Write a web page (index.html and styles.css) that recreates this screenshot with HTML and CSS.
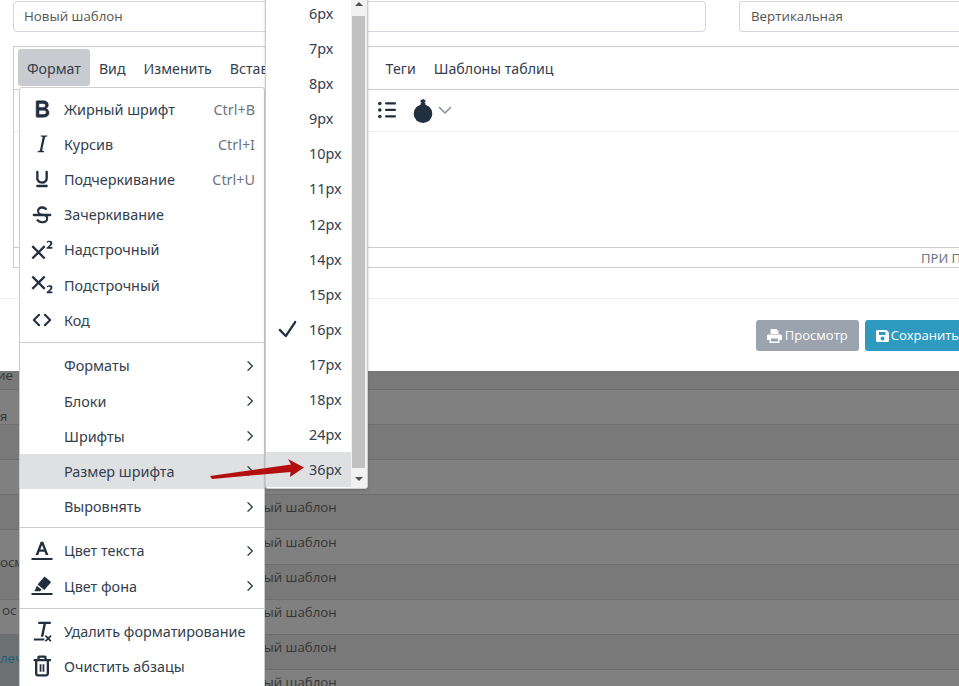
FILE: index.html
```html
<!DOCTYPE html>
<html lang="ru">
  <head>
    <meta charset="UTF-8" />
    <title>Новый шаблон</title>
    <link rel="stylesheet" href="styles.css">
  </head>
  <body>
    <svg class="defs" width="0" height="0">
      <symbol id="chevron" viewBox="0 0 24 24"><path d="M9 5.500l6.500 6.500L9 18.500" fill="none" stroke="currentColor" stroke-width="2" stroke-linecap="round" stroke-linejoin="round"/></symbol>
    </svg>

    <div class="page">
      <div class="topForm">
        <div class="field">Новый шаблон</div>
        <div class="field fieldSelect">Вертикальная</div>
      </div>

      <div class="editor">
        <div class="menuBar">
          <span class="menuBtn menuBtnOpen">Формат</span>
          <span class="menuBtn">Вид</span>
          <span class="menuBtn">Изменить</span>
          <span class="menuBtn">Вставка</span>
          <span class="menuBtn menuBtnHidden"></span>
          <span class="menuBtn">Теги</span>
          <span class="menuBtn">Шаблоны таблиц</span>
        </div>
        <div class="toolBar">
          <svg class="toolList" width="18" height="18" viewBox="0 0 18 18" fill="#222f3e">
            <circle cx="1.800" cy="2.500" r="1.800"/><circle cx="1.800" cy="9" r="1.800"/><circle cx="1.800" cy="15.500" r="1.800"/>
            <rect x="7" y="1.300" width="11" height="2.300" rx="1.100"/><rect x="7" y="7.800" width="11" height="2.300" rx="1.100"/><rect x="7" y="14.300" width="11" height="2.300" rx="1.100"/>
          </svg>
          <svg class="toolBomb" width="20" height="26" viewBox="0 0 20 26" fill="#222f3e">
            <circle cx="10" cy="15.700" r="9.300"/>
            <rect x="7.500" y="5" width="5" height="4" rx="1"/>
            <path d="M10 .5l1 1.500 1.600-.6-.6 1.600 1 1-1.600.4-.4 1.300h-2l-.4-1.300L7 4l1-1-.6-1.600L9 2z"/>
          </svg>
          <svg class="toolCaret" width="14" height="14" viewBox="0 0 14 14"><path d="M1.500 4.500L7 10l5.500-5.500" fill="none" stroke="#8a929c" stroke-width="1.600" stroke-linecap="round" stroke-linejoin="round"/></svg>
        </div>
        <div class="editArea"></div>
        <div class="statusBar">ПРИ ПОДДЕРЖКЕ TINY</div>
      </div>

      <div class="formFooter">
        <button class="btn btnGrey">
          <svg width="15" height="14" viewBox="0 0 15 14" fill="#fff"><path d="M3.500 0h6l2 2v3h-8zM1.500 5.500h12c.8 0 1.500.7 1.500 1.500v4h-2.500v3h-10v-3H0V7c0-.8.7-1.500 1.500-1.500zM4 9.500V12.500h7V9.500z"/></svg>
          <span class="btnText">Просмотр</span>
        </button>
        <button class="btn btnBlue">
          <svg width="14" height="14" viewBox="0 0 14 14" fill="#fff"><path d="M1.500 1H10.500L13 3.500V11.500c0 .8-.7 1.500-1.500 1.500h-10C.7 13 0 12.300 0 11.500v-9C0 1.700.7 1 1.500 1zM3 3v3h6.500V3zM6.500 7.500a2 2 0 100 4 2 2 0 000-4z"/></svg>
          <span class="btnText">Сохранить</span>
        </button>
      </div>

      <div class="tableWrap">
        <div class="row rowHead"><div class="nameCell nameTop">ие</div><div></div></div>
        <div class="row"><div class="nameCell nameLow">я</div><div class="tplCell"></div></div>
        <div class="row"><div class="nameCell"></div><div class="tplCell"></div></div>
        <div class="row"><div class="nameCell"></div><div class="tplCell"></div></div>
        <div class="row"><div class="nameCell"></div><div class="tplCell">Новый шаблон</div></div>
        <div class="row"><div class="nameCell nameLower">осм</div><div class="tplCell">Новый шаблон</div></div>
        <div class="row"><div class="nameCell"></div><div class="tplCell">Новый шаблон</div></div>
        <div class="row"><div class="nameCell nameHigh">ос</div><div class="tplCell">Новый шаблон</div></div>
        <div class="row"><div class="nameCell nameMid nameActive nameLink">леч</div><div class="tplCell">Новый шаблон</div></div>
        <div class="row"><div class="nameCell nameActive"></div><div class="tplCell">Новый шаблон</div></div>
      </div>

      <div class="dropMenu">
        <div class="menuGroup menuGroupFirst">
          <div class="mItem">
            <svg class="ico" viewBox="0 0 24 24"><path d="M7.800 19c-.3 0-.5 0-.6-.2l-.2-.5V5.700c0-.2 0-.4.2-.5l.6-.2h5c1.500 0 2.700.3 3.500 1 .7.600 1.100 1.400 1.100 2.500a3 3 0 01-.6 1.900c-.4.600-1 1-1.600 1.200.4.100.9.300 1.300.6s.8.700 1 1.200c.4.400.5 1 .5 1.600 0 1.300-.4 2.300-1.300 3-.8.700-2.100 1-3.800 1H7.800zm5-8.300c.6 0 1.200-.1 1.600-.5.4-.3.6-.7.6-1.300 0-1.100-.8-1.700-2.300-1.700H9.300v3.500h3.400zm.5 6c.7 0 1.300-.1 1.700-.4.400-.4.600-.9.600-1.500s-.2-1-.7-1.400c-.4-.3-1-.4-2-.4H9.400v3.800h4z" stroke="currentColor" stroke-width=".5"/></svg>
            <span class="mLabel">Жирный шрифт</span><span class="mKey">Ctrl+B</span>
          </div>
          <div class="mItem">
            <svg class="ico" viewBox="0 0 24 24"><path d="M16.700 4.700l-.1.9h-.3c-.6 0-1 0-1.400.3-.3.300-.4.600-.5 1.100l-2.100 9.800v.6c0 .5.400.8 1.400.8h.2l-.2.8H8l.2-.8h.2c1.100 0 1.800-.5 2-1.500l2-9.800.1-.5c0-.6-.4-.8-1.400-.8h-.3l.2-.9h5.800z"/></svg>
            <span class="mLabel">Курсив</span><span class="mKey">Ctrl+I</span>
          </div>
          <div class="mItem">
            <svg class="ico" viewBox="0 0 24 24"><path d="M16 5c.6 0 1 .4 1 1v5.500a4 4 0 01-.4 1.800l-1 1.400a5.300 5.300 0 01-5.500 1 5 5 0 01-1.600-1c-.5-.4-.8-.9-1.100-1.400a4 4 0 01-.4-1.800V6c0-.6.400-1 1-1s1 .4 1 1v5.500c0 .3 0 .6.200 1l.6.700a3.300 3.300 0 002.200.8 3.400 3.400 0 002.200-.8c.3-.2.400-.5.600-.8l.2-.9V6c0-.6.400-1 1-1zM8 17h8c.6 0 1 .4 1 1s-.4 1-1 1H8a1 1 0 010-2z"/></svg>
            <span class="mLabel">Подчеркивание</span><span class="mKey">Ctrl+U</span>
          </div>
          <div class="mItem">
            <svg class="ico" viewBox="0 0 24 24"><path d="M15.600 8.500c-.5-.7-1-1.100-1.300-1.300-.6-.4-1.300-.6-2-.6-2.700 0-2.800 1.700-2.800 2.100 0 1.600 1.800 2 3.200 2.300 4.400.9 4.600 2.800 4.600 3.900 0 1.400-.7 4.100-5 4.100A6.200 6.200 0 017 16.400l1.500-1.100c.4.600 1.600 2 3.700 2 1.600 0 2.500-.4 3-1 .3-.4.400-.9.400-1.300 0-.8-.2-2-3-2.600-1.800-.4-4.800-1-4.800-3.900 0-1 .3-2 1.100-2.700.9-.8 2-1.200 3.400-1.200 1 0 1.900.2 2.700.7.600.4 1 .8 1.600 1.600l-1.500 1z"/><path d="M5 11h14c.6 0 1 .4 1 1s-.4 1-1 1H5a1 1 0 010-2z"/></svg>
            <span class="mLabel">Зачеркивание</span>
          </div>
          <div class="mItem">
            <svg class="ico" viewBox="0 0 24 24"><path d="M15 9.400L10.400 14l4.600 4.600-1.400 1.400L9 15.400 4.400 20 3 18.600 7.600 14 3 9.400 4.400 8 9 12.600 13.600 8 15 9.400zm5.900 1.600h-5v-1l1-.8 1.700-1.600c.3-.5.5-.9.5-1.300 0-.3 0-.6-.3-.8-.2-.2-.5-.3-.9-.3l-.8.2-.7.6-.5-1 1.100-.7c.4-.2.9-.3 1.400-.3.8 0 1.400.2 1.800.6.400.4.600.9.600 1.600s-.1.900-.4 1.300l-.8 1-1.200 1h2.500V11z"/></svg>
            <span class="mLabel">Надстрочный</span>
          </div>
          <div class="mItem">
            <svg class="ico" viewBox="0 0 24 24"><path d="M10.400 10l4.600 4.600-1.400 1.400L9 11.400 4.400 16 3 14.600 7.600 10 3 5.400 4.400 4 9 8.600 13.600 4 15 5.400 10.400 10zM21 19h-5v-1l1-.8 1.700-1.600c.3-.4.5-.8.5-1.200 0-.3 0-.6-.3-.7-.2-.2-.5-.3-.9-.3a2 2 0 00-.8.2l-.7.5-.4-1.100 1-.6 1.400-.2c.8 0 1.400.1 1.800.5.400.4.600 1 .6 1.600 0 .5-.2 1-.4 1.300l-.9 1-1.100 1h2.400V19z"/></svg>
            <span class="mLabel">Подстрочный</span>
          </div>
          <div class="mItem">
            <svg class="ico" viewBox="0 0 24 24"><path d="M9.500 7.500L5 12l4.500 4.500M14.500 7.500L19 12l-4.500 4.500" fill="none" stroke="currentColor" stroke-width="1.800" stroke-linecap="round" stroke-linejoin="round"/></svg>
            <span class="mLabel">Код</span>
          </div>
        </div>

        <div class="menuGroup">
          <div class="mItem mItemPlain"><span class="mLabel">Форматы</span><svg class="chev"><use href="#chevron"/></svg></div>
          <div class="mItem mItemPlain"><span class="mLabel">Блоки</span><svg class="chev"><use href="#chevron"/></svg></div>
          <div class="mItem mItemPlain"><span class="mLabel">Шрифты</span><svg class="chev"><use href="#chevron"/></svg></div>
          <div class="mItem mItemPlain mItemOn"><span class="mLabel">Размер шрифта</span><svg class="chev"><use href="#chevron"/></svg></div>
          <div class="mItem mItemPlain"><span class="mLabel">Выровнять</span><svg class="chev"><use href="#chevron"/></svg></div>
        </div>

        <div class="menuGroup">
          <div class="mItem">
            <svg class="ico" viewBox="0 0 24 24"><path d="M3 18h18v1.800H3zM10.900 4h2.200l4.400 11.500h-2.300l-1-2.800H9.800l-1 2.800H6.500zM10.500 10.800h3L12 6.800z"/></svg>
            <span class="mLabel">Цвет текста</span><svg class="chev"><use href="#chevron"/></svg>
          </div>
          <div class="mItem">
            <svg class="ico" viewBox="0 0 24 24"><path d="M3 18h18v1.800H3zM14.700 4.300l4.600 3.800c.4.300.4.800.1 1.100l-5.400 6.300-5.800-4.800 5.400-6.300c.3-.3.800-.4 1.100-.1zM7.600 11.800l4 3.300-1.300 1.400H5.500z"/></svg>
            <span class="mLabel">Цвет фона</span><svg class="chev"><use href="#chevron"/></svg>
          </div>
        </div>

        <div class="menuGroup">
          <div class="mItem">
            <svg class="ico" viewBox="0 0 24 24"><path d="M9 4h10.500v2h-4.100l-2.300 11H11l2.300-11H8.600zM5 18.500h9v1.600H5zM15.400 15.500l1.900 1.900 1.900-1.900 1 1-1.900 1.900 1.900 1.900-1 1-1.900-1.900-1.900 1.900-1-1 1.900-1.900-1.900-1.900z"/></svg>
            <span class="mLabel">Удалить форматирование</span>
          </div>
          <div class="mItem">
            <svg class="ico" viewBox="0 0 24 24"><path fill-rule="evenodd" d="M9.500 3h5c.8 0 1.500.7 1.500 1.500V6h2.800c.6 0 1 .4 1 1s-.4 1-1 1H18v10.500c0 1.400-1.100 2.500-2.500 2.500h-7A2.500 2.500 0 016 18.500V8h-.3c-.6 0-1-.4-1-1s.4-1 1-1H8V4.500C8 3.700 8.700 3 9.500 3zM10 5v1h4V5zM8 8v10.500c0 .3.200.5.500.5h7c.3 0 .5-.2.500-.5V8zM10 10.500h1.500v6.500H10zM12.500 10.500H14v6.500h-1.500z"/></svg>
            <span class="mLabel">Очистить абзацы</span>
          </div>
        </div>
      </div>

      <div class="sizeMenu">
        <div class="sizeList">
          <div class="sItem">6px</div>
          <div class="sItem">7px</div>
          <div class="sItem">8px</div>
          <div class="sItem">9px</div>
          <div class="sItem">10px</div>
          <div class="sItem">11px</div>
          <div class="sItem">12px</div>
          <div class="sItem">14px</div>
          <div class="sItem">15px</div>
          <div class="sItem">
            <svg class="checkIco" viewBox="0 0 24 24"><path d="M18.200 5.400a1 1 0 011.600 1.200l-8 12a1 1 0 01-1.500.1l-5-5a1 1 0 111.400-1.400l4.100 4.100 7.400-10.900z"/></svg>
            16px
          </div>
          <div class="sItem">17px</div>
          <div class="sItem">18px</div>
          <div class="sItem">24px</div>
          <div class="sItem sItemOn">36px</div>
        </div>
        <div class="scrollBar">
          <div class="scrollArrow scrollUp"></div>
          <div class="scrollThumb"></div>
          <div class="scrollArrow scrollDown"></div>
        </div>
      </div>

      <svg class="redArrow" width="100" height="24" viewBox="0 0 100 24">
        <path d="M0 18L81 6.500 78 1l16 8.500L80 19l.5-5L2 21z" fill="#b30f0f"/>
      </svg>
    </div>
  </body>
</html>
```

FILE: styles.css
```css
html,
body {
  margin: 0;
  height: 686px;
  overflow: hidden;
  background-color: white;
}
.defs {
  position: absolute;
}
.page {
  position: relative;
  width: 1000px;
  font-family: "Open Sans", sans-serif;
  color: #222f3e;
}

/* top inputs */
.topForm {
  display: grid;
  grid-template-columns: 693px 1fr;
  grid-gap: 33px;
  padding: 1px 0 0 13px;
}
.field {
  height: 31px;
  box-sizing: border-box;
  border: 1px solid #d2d6de;
  border-radius: 4px;
  padding: 0 10px;
  font-size: 13.3px;
  line-height: 29px;
  color: #555;
}
.fieldSelect {
  border-right: 0;
  padding-left: 11px;
}

/* editor */
.editor {
  margin: 14px 0 0 13px;
  border: 1px solid #ccc;
  border-right: 0;
  font-family: "Noto Sans", sans-serif;
}
.menuBar {
  display: flex;
  height: 43px;
  box-sizing: border-box;
  padding: 2px 0 0 4px;
  border-bottom: 1px solid #ccc;
}
.menuBtn {
  height: 37px;
  padding: 0 9px;
  font-size: 14.2px;
  line-height: 39px;
  border-radius: 3px;
  color: #34404e;
  white-space: nowrap;
}
.menuBtnOpen {
  background-color: #c8cbcf;
}
.menuBtnHidden {
  width: 66px;
}
.toolBar {
  display: flex;
  align-items: center;
  height: 42px;
  box-sizing: border-box;
  padding: 0 0 1px 364px;
  border-bottom: 1px solid #eee;
}
.toolBomb {
  margin: 0 0 0 17px;
  position: relative;
  top: 1px;
}
.toolCaret {
  margin-left: 5px;
}
.editArea {
  height: 115px;
}
.statusBar {
  height: 19px;
  border-top: 1px solid #ccc;
  padding-left: 907px;
  font-size: 13px;
  line-height: 20px;
  color: #6d7681;
  white-space: nowrap;
  overflow: hidden;
}

/* buttons under the editor */
.formFooter {
  display: flex;
  justify-content: flex-end;
  gap: 6px;
  margin-top: 30px;
  padding: 21px 30px 20px 0;
  border-top: 1px solid #eee;
}
.btn {
  display: flex;
  align-items: center;
  gap: 3px;
  height: 31px;
  padding: 0 11px;
  border: 0;
  border-radius: 3px;
  color: white;
  font-family: "Open Sans", sans-serif;
  font-size: 13px;
}
.btnText {
  margin-top: -2px;
}
.btnGrey {
  background-color: #9aa3ae;
}
.btnBlue {
  gap: 1px;
  background-color: #2f9ac0;
}

/* table under the dark layer */
.tableWrap {
  background-color: #7f7f7f;
  font-size: 13.3px;
  color: #353535;
}
.row {
  display: grid;
  grid-template-columns: 238px 1fr;
  height: 35px;
  box-sizing: border-box;
  border-bottom: 1px solid #6e6e6e;
}
.row:nth-child(odd) {
  background-color: #797979;
}
.row:nth-child(even) {
  background-color: #808080;
}
.rowHead {
  height: 19px;
}
.tplCell {
  padding-top: 3px;
  line-height: 18px;
}
.nameCell {
  line-height: 18px;
  white-space: nowrap;
}
.nameTop {
  margin: -5px 0 0 -3px;
}
.nameLow {
  padding-top: 17px;
}
.nameLower {
  padding-top: 23px;
}
.nameHigh {
  padding: 1px 0 0 2px;
}
.nameMid {
  padding-top: 14px;
}
.nameActive {
  background-color: #6c7073;
}
.nameLink {
  color: #1f5f70;
}

/* format menu */
.dropMenu {
  position: absolute;
  left: 19px;
  top: 87px;
  width: 246px;
  box-sizing: border-box;
  border: 1px solid #ccc;
  border-radius: 3px;
  background-color: white;
  font-family: "Noto Sans", sans-serif;
  font-size: 14.4px;
  color: #34404e;
}
.menuGroup {
  padding: 5px 0 4px;
  border-top: 1px solid #ccc;
}
.menuGroupFirst {
  padding: 3.500px 0 4.500px;
  border-top: 0;
}
.menuGroup:nth-child(2) {
  padding-bottom: 3px;
}
.mItem {
  display: flex;
  align-items: center;
  height: 35.2px;
  padding: 0 9px 0 8px;
}
.mItemPlain {
  padding-left: 44px;
}
.mItemOn {
  background-color: #dee0e2;
}
.ico {
  width: 28px;
  height: 28px;
  margin-right: 8px;
  fill: #222f3e;
  color: #222f3e;
  flex: none;
}
.mLabel {
  flex: 1;
  white-space: nowrap;
}
.mKey {
  color: #6d7681;
}
.chev {
  width: 16px;
  height: 16px;
  margin-right: -3px;
  flex: none;
}

/* font size submenu */
.sizeMenu {
  position: absolute;
  left: 265px;
  top: -1px;
  display: flex;
  width: 103px;
  height: 490px;
  box-sizing: border-box;
  border: 1px solid #ccc;
  border-radius: 0 0 3px 3px;
  background-color: white;
  box-shadow: 0 1px 3px rgba(0, 0, 0, 0.2);
  overflow: hidden;
  font-family: "Noto Sans", sans-serif;
  font-size: 14.4px;
  color: #34404e;
}
.sizeList {
  width: 85px;
  margin-top: -4px;
}
.sItem {
  position: relative;
  height: 35.1px;
  padding-left: 43px;
  line-height: 35px;
}
.sItemOn {
  background-color: #dee0e2;
}
.checkIco {
  position: absolute;
  left: 7px;
  top: 3px;
  width: 28px;
  height: 28px;
  fill: #222f3e;
}
.scrollBar {
  display: flex;
  flex-direction: column;
  width: 16px;
  background-color: #f1f1f1;
}
.scrollThumb {
  flex: 1;
  margin: 0 2px 0 1px;
  background-color: #c1c1c1;
}
.scrollArrow {
  position: relative;
  height: 16px;
}
.scrollDown {
  height: 20px;
}
.scrollArrow::after {
  content: "";
  position: absolute;
  left: 4px;
  border-left: 4px solid transparent;
  border-right: 4px solid transparent;
}
.scrollUp::after {
  top: 2px;
  border-bottom: 4px solid #505050;
}
.scrollDown::after {
  top: 9px;
  border-top: 4px solid #505050;
}

.redArrow {
  position: absolute;
  left: 210px;
  top: 458px;
}
```
